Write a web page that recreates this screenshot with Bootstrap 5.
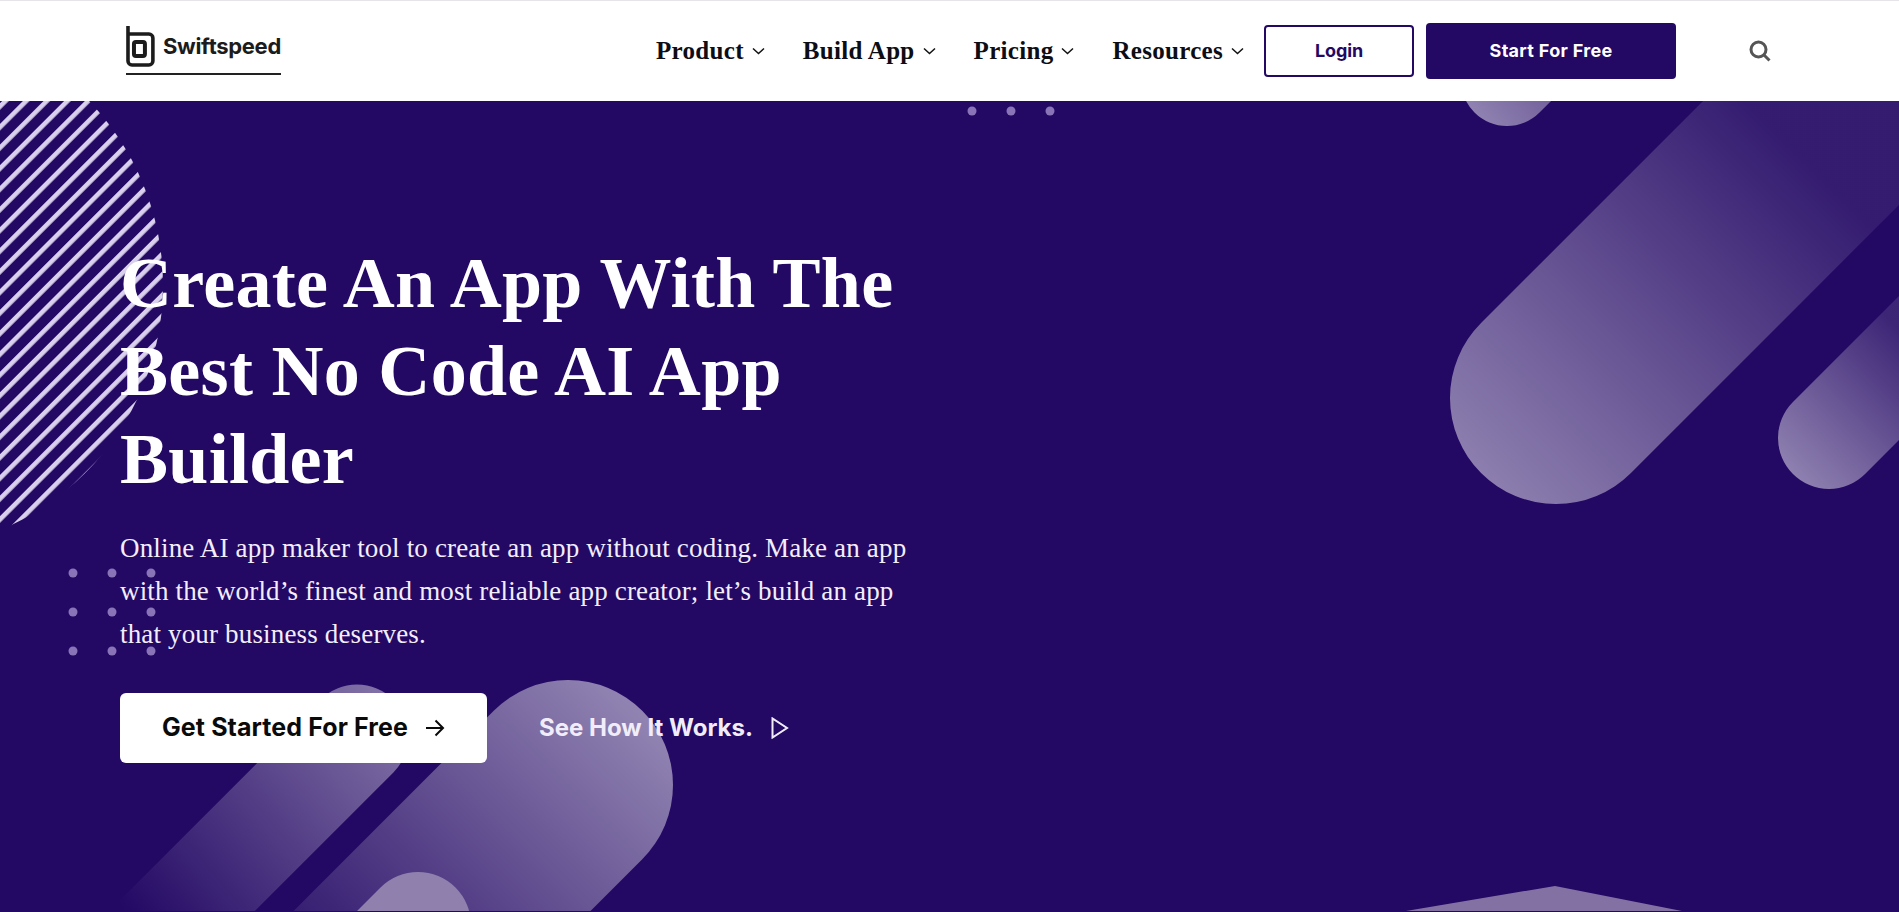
<!DOCTYPE html>
<html lang="en">
<head>
  <meta charset="UTF-8" />
  <meta name="viewport" content="width=device-width, initial-scale=1" />
  <title>Swiftspeed - No Code AI App Builder</title>
  <link href="https://cdn.jsdelivr.net/npm/bootstrap@5.3.0/dist/css/bootstrap.min.css" rel="stylesheet" />
  <style>
    body {
      background: #230864;
      overflow: hidden;
    }
    .site-head {
      height: 101px;
      background: #fff;
      border-top: 1px solid #e6e4e8;
      padding: 0 0 0 126px;
    }
    .logo-link {
      width: 155px;
      height: 50px;
      border-bottom: 2px solid #222;
      margin-bottom: 2px;
      padding-bottom: 6px;
      gap: 7px;
      text-decoration: none;
    }
    .logo-text {
      font-family: Inter, sans-serif;
      font-weight: 700;
      font-size: 22px;
      color: #1c1c1c;
      letter-spacing: -.3px;
    }
    .main-nav { gap: 38px; margin-right: 20px; }
    .main-nav .nav-link {
      font-family: "Liberation Serif", serif;
      font-weight: 700;
      font-size: 25px;
      letter-spacing: .3px;
      color: #0d0d14;
      padding: 0;
      display: flex;
      align-items: center;
      gap: 8px;
    }
    .btn-login, .btn-start {
      font-family: Inter, sans-serif;
      font-weight: 700;
      font-size: 18px;
      border-radius: 4px;
    }
    .btn-login {
      width: 150px;
      height: 52px;
      color: #230864;
      border: 2px solid #230864;
      background: #fff;
      line-height: 36px;
      letter-spacing: -.1px;
    }
    .btn-start {
      width: 250px;
      height: 56px;
      color: #fff;
      background: #230864;
      border: 0;
      margin-left: 12px;
      line-height: 44px;
      letter-spacing: .3px;
    }
    .search-btn { margin-left: 73px; line-height: 0; }
    .head-end { width: 128px; }
    .hero {
      height: 810px;
      padding: 138px 0 0 120px;
      background: #230864;
    }
    .hero-art { position: absolute; inset: 0; }
    .hero-body { position: relative; width: 800px; }
    .hero-title {
      font-family: "Liberation Serif", serif;
      font-weight: 700;
      font-size: 72px;
      line-height: 88px;
      letter-spacing: .3px;
      color: #fff;
      margin-bottom: 24px;
    }
    .hero-copy {
      font-family: "Liberation Serif", serif;
      font-size: 27px;
      line-height: 43px;
      letter-spacing: .16px;
      color: #f3eefc;
      margin-bottom: 37px;
    }
    .btn-getstarted {
      width: 367px;
      height: 70px;
      background: #fff;
      color: #0a0a0a;
      border: 0;
      border-radius: 6px;
      font-family: Inter, sans-serif;
      font-weight: 700;
      font-size: 25px;
      letter-spacing: .1px;
      gap: 17px;
    }
    .btn-getstarted:hover { background: #fff; color: #0a0a0a; }
    .how-link {
      margin-left: 52px;
      gap: 18px;
      color: #f1ecfa;
      font-family: Inter, sans-serif;
      font-weight: 700;
      font-size: 24px;
      text-decoration: none;
    }
  </style>
</head>
<body>

  <header class="site-head d-flex align-items-center">
    <a href="#" class="logo-link d-flex align-items-center">
      <svg width="30" height="42" viewBox="0 0 30 42" fill="none" stroke="#1c1c1c">
        <path d="M2 1V36a4 4 0 0 0 4 4H23a4 4 0 0 0 4-4V13a4 4 0 0 0-4-4H2" stroke-width="3.6"/>
        <rect x="8" y="17" width="11" height="14" rx="2" stroke-width="4"/>
      </svg>
      <span class="logo-text">Swiftspeed</span>
    </a>
    <nav class="ms-auto d-flex align-items-center">
      <ul class="nav main-nav">
        <li class="nav-item"><a class="nav-link" href="#">Product
          <svg width="13" height="8" viewBox="0 0 13 8" fill="none" stroke="#111" stroke-width="1.5"><path d="M1 1.5l5.5 5 5.5-5"/></svg></a></li>
        <li class="nav-item"><a class="nav-link" href="#">Build App
          <svg width="13" height="8" viewBox="0 0 13 8" fill="none" stroke="#111" stroke-width="1.5"><path d="M1 1.5l5.5 5 5.5-5"/></svg></a></li>
        <li class="nav-item"><a class="nav-link" href="#">Pricing
          <svg width="13" height="8" viewBox="0 0 13 8" fill="none" stroke="#111" stroke-width="1.5"><path d="M1 1.5l5.5 5 5.5-5"/></svg></a></li>
        <li class="nav-item"><a class="nav-link" href="#">Resources
          <svg width="13" height="8" viewBox="0 0 13 8" fill="none" stroke="#111" stroke-width="1.5"><path d="M1 1.5l5.5 5 5.5-5"/></svg></a></li>
      </ul>
      <a href="#" class="btn btn-login">Login</a>
      <a href="#" class="btn btn-start">Start For Free</a>
      <a href="#" class="search-btn">
        <svg width="22" height="22" viewBox="0 0 22 22" fill="none" stroke="#555" stroke-width="3"><circle cx="9.5" cy="9.5" r="7.5"/><path d="M15 15l5.5 5.5"/></svg>
      </a>
      <span class="head-end"></span>
    </nav>
  </header>

  <section class="hero position-relative overflow-hidden">
    <!-- background shapes, viewBox keeps page coordinates -->
    <svg class="hero-art" width="1899" height="811" viewBox="0 101 1899 811">
      <defs>
        <linearGradient id="pillUp" gradientUnits="userSpaceOnUse" x1="1480" y1="475" x2="1800" y2="155">
          <stop offset="0" stop-color="#fff" stop-opacity=".48"/>
          <stop offset="1" stop-color="#fff" stop-opacity=".08"/>
        </linearGradient>
        <linearGradient id="pillSide" gradientUnits="userSpaceOnUse" x1="1790" y1="480" x2="1920" y2="350">
          <stop offset="0" stop-color="#fff" stop-opacity=".5"/>
          <stop offset="1" stop-color="#fff" stop-opacity=".12"/>
        </linearGradient>
        <linearGradient id="pillTop" gradientUnits="userSpaceOnUse" x1="1480" y1="125" x2="1560" y2="60">
          <stop offset="0" stop-color="#fff" stop-opacity=".5"/>
          <stop offset="1" stop-color="#fff" stop-opacity=".3"/>
        </linearGradient>
        <linearGradient id="pillBig" gradientUnits="userSpaceOnUse" x1="640" y1="710" x2="340" y2="1010">
          <stop offset="0" stop-color="#fff" stop-opacity=".5"/>
          <stop offset="1" stop-color="#fff" stop-opacity=".05"/>
        </linearGradient>
        <linearGradient id="pillBack" gradientUnits="userSpaceOnUse" x1="385" y1="705" x2="130" y2="920">
          <stop offset="0" stop-color="#fff" stop-opacity=".42"/>
          <stop offset="1" stop-color="#fff" stop-opacity="0"/>
        </linearGradient>
        <pattern id="stripes" width="14.6" height="14.6" patternUnits="userSpaceOnUse" patternTransform="rotate(-45)">
          <rect width="14.6" height="4.6" fill="#d8d0ec"/>
        </pattern>
      </defs>

      <circle cx="-103" cy="285" r="266" fill="url(#stripes)"/>

      <line x1="357" y1="736" x2="57" y2="1036" stroke="url(#pillBack)" stroke-width="103" stroke-linecap="round"/>
      <line x1="568" y1="785" x2="268" y2="1085" stroke="url(#pillBig)" stroke-width="210" stroke-linecap="round"/>
      <line x1="418" y1="925" x2="318" y2="1025" stroke="#8f80ad" stroke-width="106" stroke-linecap="round"/>

      <line x1="1556" y1="398" x2="1956" y2="-2" stroke="url(#pillUp)" stroke-width="212" stroke-linecap="round"/>
      <line x1="1829" y1="438" x2="2029" y2="238" stroke="url(#pillSide)" stroke-width="102" stroke-linecap="round"/>
      <line x1="1507" y1="80" x2="1607" y2="-20" stroke="url(#pillTop)" stroke-width="92" stroke-linecap="round"/>

      <path d="M1555 886L1400 912H1687Z" fill="#8471a3"/>

      <g fill="#8a74b8">
        <circle cx="972" cy="111" r="4.5"/><circle cx="1011" cy="111" r="4.5"/><circle cx="1050" cy="111" r="4.5"/>
        <circle cx="73" cy="573" r="4.5"/><circle cx="112" cy="573" r="4.5"/><circle cx="151" cy="573" r="4.5"/>
        <circle cx="73" cy="612" r="4.5"/><circle cx="112" cy="612" r="4.5"/><circle cx="151" cy="612" r="4.5"/>
        <circle cx="73" cy="651" r="4.5"/><circle cx="112" cy="651" r="4.5"/><circle cx="151" cy="651" r="4.5"/>
      </g>
    </svg>

    <div class="hero-body">
      <h1 class="hero-title">Create An App With The Best No Code AI App Builder</h1>
      <p class="hero-copy">Online AI app maker tool to create an app without coding. Make an app with the world’s finest and most reliable app creator; let’s build an app that your business deserves.</p>
      <div class="d-flex align-items-center">
        <a href="#" class="btn btn-getstarted d-flex align-items-center justify-content-center">Get Started For Free
          <svg width="20" height="18" viewBox="0 0 20 18" fill="none" stroke="#0a0a0a" stroke-width="2"><path d="M1 9h17M10.5 1.5L18 9l-7.5 7.5"/></svg>
        </a>
        <a href="#" class="how-link d-flex align-items-center">See How It Works.
          <svg width="18" height="22" viewBox="0 0 18 22" fill="none" stroke="#f1ecfa" stroke-width="2"><path d="M1.5 1.5v19L16 11Z"/></svg>
        </a>
      </div>
    </div>
  </section>

  <script src="https://cdn.jsdelivr.net/npm/bootstrap@5.3.0/dist/js/bootstrap.bundle.min.js"></script>
</body>
</html>
